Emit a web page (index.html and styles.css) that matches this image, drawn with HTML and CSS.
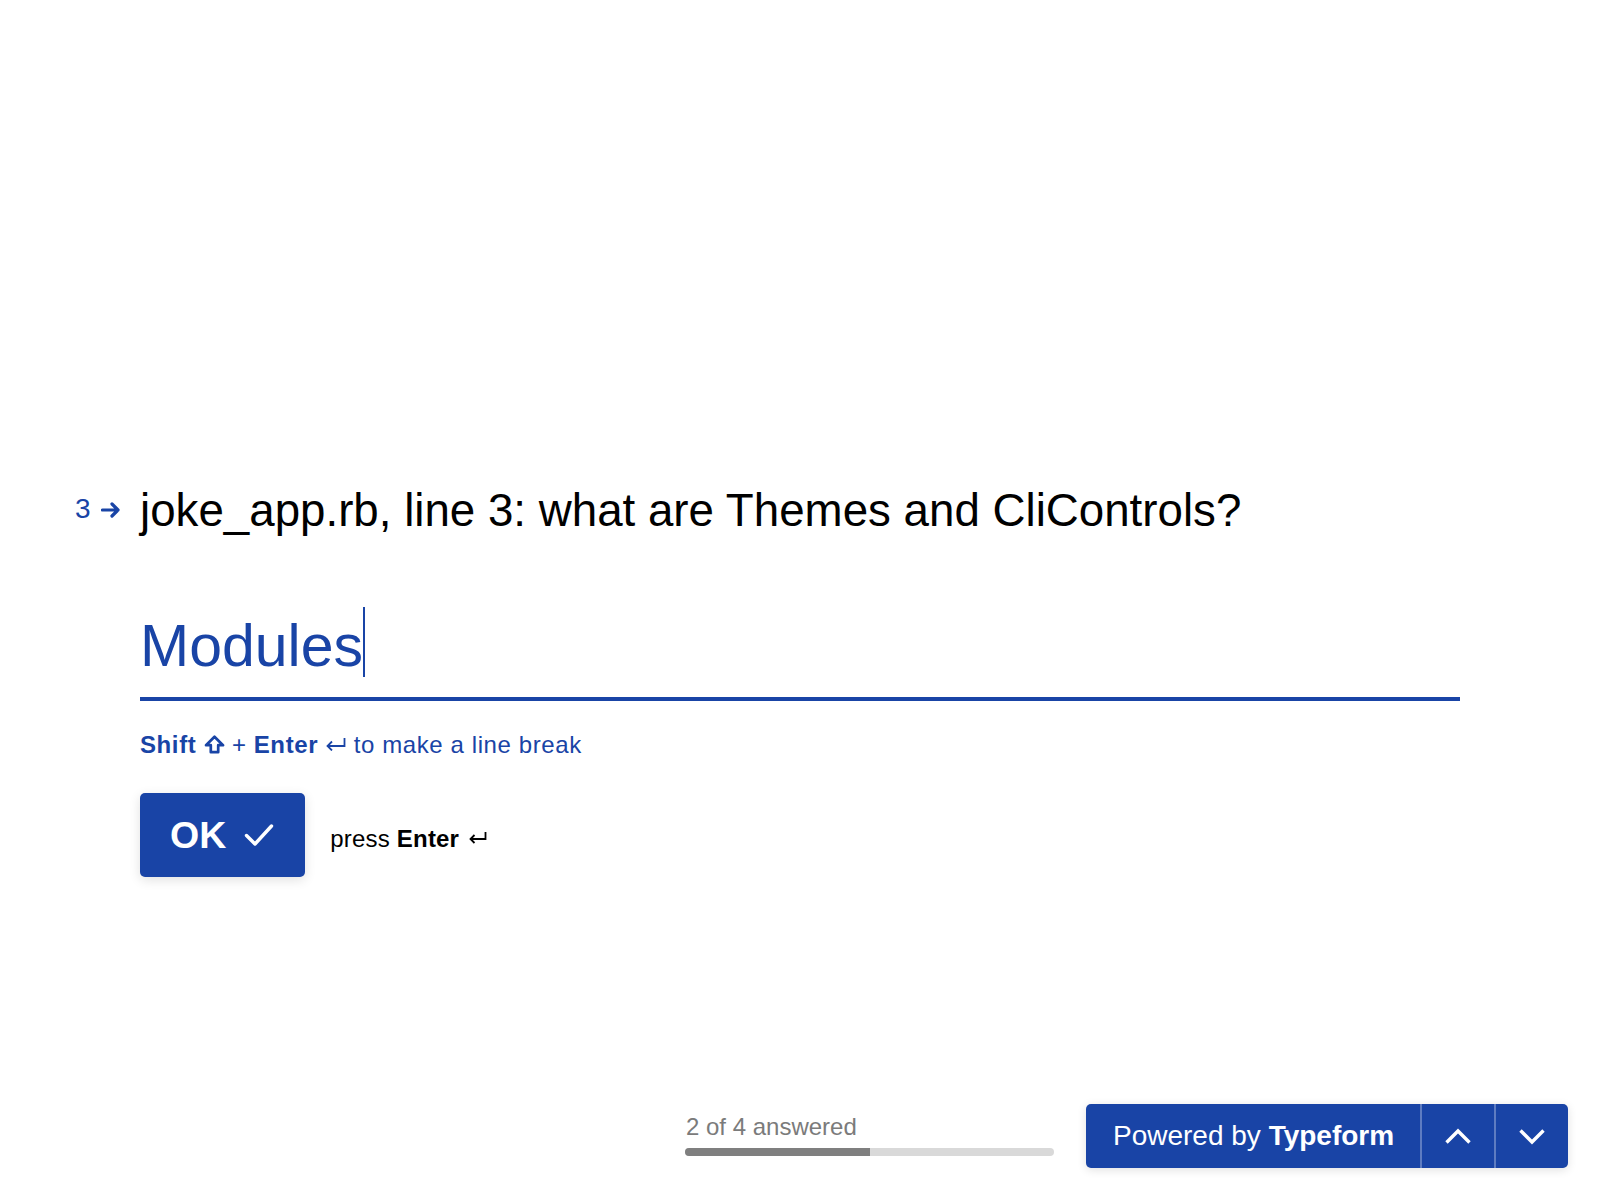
FILE: index.html
```html
<!DOCTYPE html>
<html lang="en">
<head>
<meta charset="utf-8">
<title>joke_app.rb quiz</title>
<link rel="stylesheet" href="styles.css">
</head>
<body>
<div class="page">
  <main class="main">
    <div class="question">
      <div class="q-index">
        <span class="q-num">3</span>
        <svg class="q-arrow" width="20" height="16" viewBox="0 0 20 16"><path d="M1.5 8 H17 M11 2 L17 8 L11 14" fill="none" stroke="currentColor" stroke-width="3.2" stroke-linecap="round" stroke-linejoin="round"/></svg>
      </div>
      <h1 class="q-text">joke_app.rb, line 3: what are Themes and CliControls?</h1>

      <div class="answer">
        <div class="input">Modules<span class="caret"></span></div>
        <div class="hint"><b>Shift</b> <svg class="ico-shift" width="21" height="19" viewBox="0 0 21 19"><path d="M10.5 1.8 L19 10.2 H14.2 V17.2 H6.8 V10.2 H2 Z" fill="none" stroke="currentColor" stroke-width="2.7" stroke-linejoin="round"/></svg> + <b>Enter</b> <svg class="ico-ret" width="21" height="14" viewBox="0 0 21 14"><path d="M19.5 1 V9 H2.5 M7 4.5 L2.5 9 L7 13.5" fill="none" stroke="currentColor" stroke-width="1.8"/></svg> to make a line break</div>
        <div class="actions">
          <button class="ok-btn" type="button">OK <svg width="30" height="24" viewBox="0 0 30 24"><path d="M2.5 12.5 L11 21 L27.5 3" fill="none" stroke="#fff" stroke-width="3.4" stroke-linecap="round" stroke-linejoin="round"/></svg></button>
          <div class="press">press <b>Enter</b> <svg class="ico-ret2" width="19" height="13" viewBox="0 0 19 13"><path d="M17.5 1 V8 H2.5 M6.5 4 L2.5 8 L6.5 12" fill="none" stroke="currentColor" stroke-width="1.8"/></svg></div>
        </div>
      </div>
    </div>
  </main>

  <footer class="footer">
    <div class="progress">
      <div class="progress-label">2 of 4 answered</div>
      <div class="progress-track"><div class="progress-fill" style="width:50%"></div></div>
    </div>
    <div class="powered">
      <div class="powered-text">Powered by <b>Typeform</b></div>
      <div class="nav-btn"><svg width="28" height="17" viewBox="0 0 28 17"><path d="M2.5 14.5 L14 3 L25.5 14.5" fill="none" stroke="#fff" stroke-width="3.4"/></svg></div>
      <div class="nav-btn"><svg width="28" height="17" viewBox="0 0 28 17"><path d="M2.5 2.5 L14 14 L25.5 2.5" fill="none" stroke="#fff" stroke-width="3.4"/></svg></div>
    </div>
  </footer>
</div>
</body>
</html>
```

FILE: styles.css
```css
* { box-sizing: border-box; }

html, body {
  margin: 0;
  padding: 0;
  background: #ffffff;
}

body {
  font-family: "Liberation Sans", Arial, Helvetica, sans-serif;
  color: #000;
}

.page {
  height: 1200px;
  display: flex;
  flex-direction: column;
}

.main {
  flex: 1;
  padding: 484px 0 0 75px;
}

.question {
  display: grid;
  grid-template-columns: 65px 1320px;
}

.q-index {
  display: flex;
  align-items: flex-start;
  color: #1944a6;
}

.q-num {
  font-size: 28px;
  line-height: 34px;
  margin-top: 8px;
}

.q-arrow {
  margin: 18px 0 0 10px;
}

.q-text {
  margin: 0;
  font-size: 45.7px;
  line-height: 54px;
  font-weight: 400;
  color: #000;
}

.answer {
  grid-column: 2;
}

.input {
  margin-top: 69px;
  font-size: 59px;
  line-height: 70px;
  color: #1944a6;
  padding-bottom: 16px;
  border-bottom: 4px solid #1944a6;
}

.caret {
  display: inline-block;
  width: 2px;
  height: 70px;
  margin-left: 0;
  background: #1944a6;
  vertical-align: -11px;
}

.hint {
  margin-top: 29px;
  font-size: 24px;
  line-height: 30px;
  letter-spacing: 0.6px;
  color: #1944a6;
}

.hint b { font-weight: 700; }

.ico-shift {
  vertical-align: -1px;
}

.ico-ret {
  vertical-align: 2px;
}

.actions {
  margin-top: 33px;
  display: flex;
  align-items: flex-start;
}

.ok-btn {
  display: flex;
  align-items: center;
  gap: 18px;
  height: 84px;
  padding: 0 31px 0 30px;
  border: 0;
  border-radius: 5px;
  background: #1944a6;
  color: #fff;
  font-family: "Liberation Sans", Arial, sans-serif;
  font-size: 37.5px;
  font-weight: 700;
  box-shadow: 0 3px 12px rgba(0, 0, 0, 0.12);
}

.press {
  margin: 31px 0 0 25px;
  font-size: 24px;
  line-height: 29px;
  letter-spacing: 0.2px;
  color: #000;
}

.ico-ret2 {
  margin-left: 2px;
  vertical-align: 3px;
}

.footer {
  display: flex;
  justify-content: flex-end;
  align-items: flex-end;
  gap: 32px;
  padding: 0 32px 32px 0;
}

.progress {
  width: 369px;
  margin-bottom: 12px;
}

.progress-label {
  font-size: 24px;
  line-height: 29px;
  color: #7b7b7b;
  padding-left: 1px;
}

.progress-track {
  margin-top: 7px;
  height: 8px;
  border-radius: 4px;
  background: #d9d9d9;
  overflow: hidden;
}

.progress-fill {
  height: 100%;
  background: #7f7f7f;
}

.powered {
  display: flex;
  height: 64px;
  border-radius: 5px;
  background: #1944a6;
  color: #fff;
  box-shadow: 0 2px 10px rgba(0, 0, 0, 0.12);
  overflow: hidden;
}

.powered-text {
  display: flex;
  align-items: center;
  padding: 0 27px;
  font-size: 28px;
  white-space: pre;
  width: 334px;
}

.nav-btn {
  width: 74px;
  display: flex;
  align-items: center;
  justify-content: center;
  border-left: 2px solid rgba(255, 255, 255, 0.3);
}
```
